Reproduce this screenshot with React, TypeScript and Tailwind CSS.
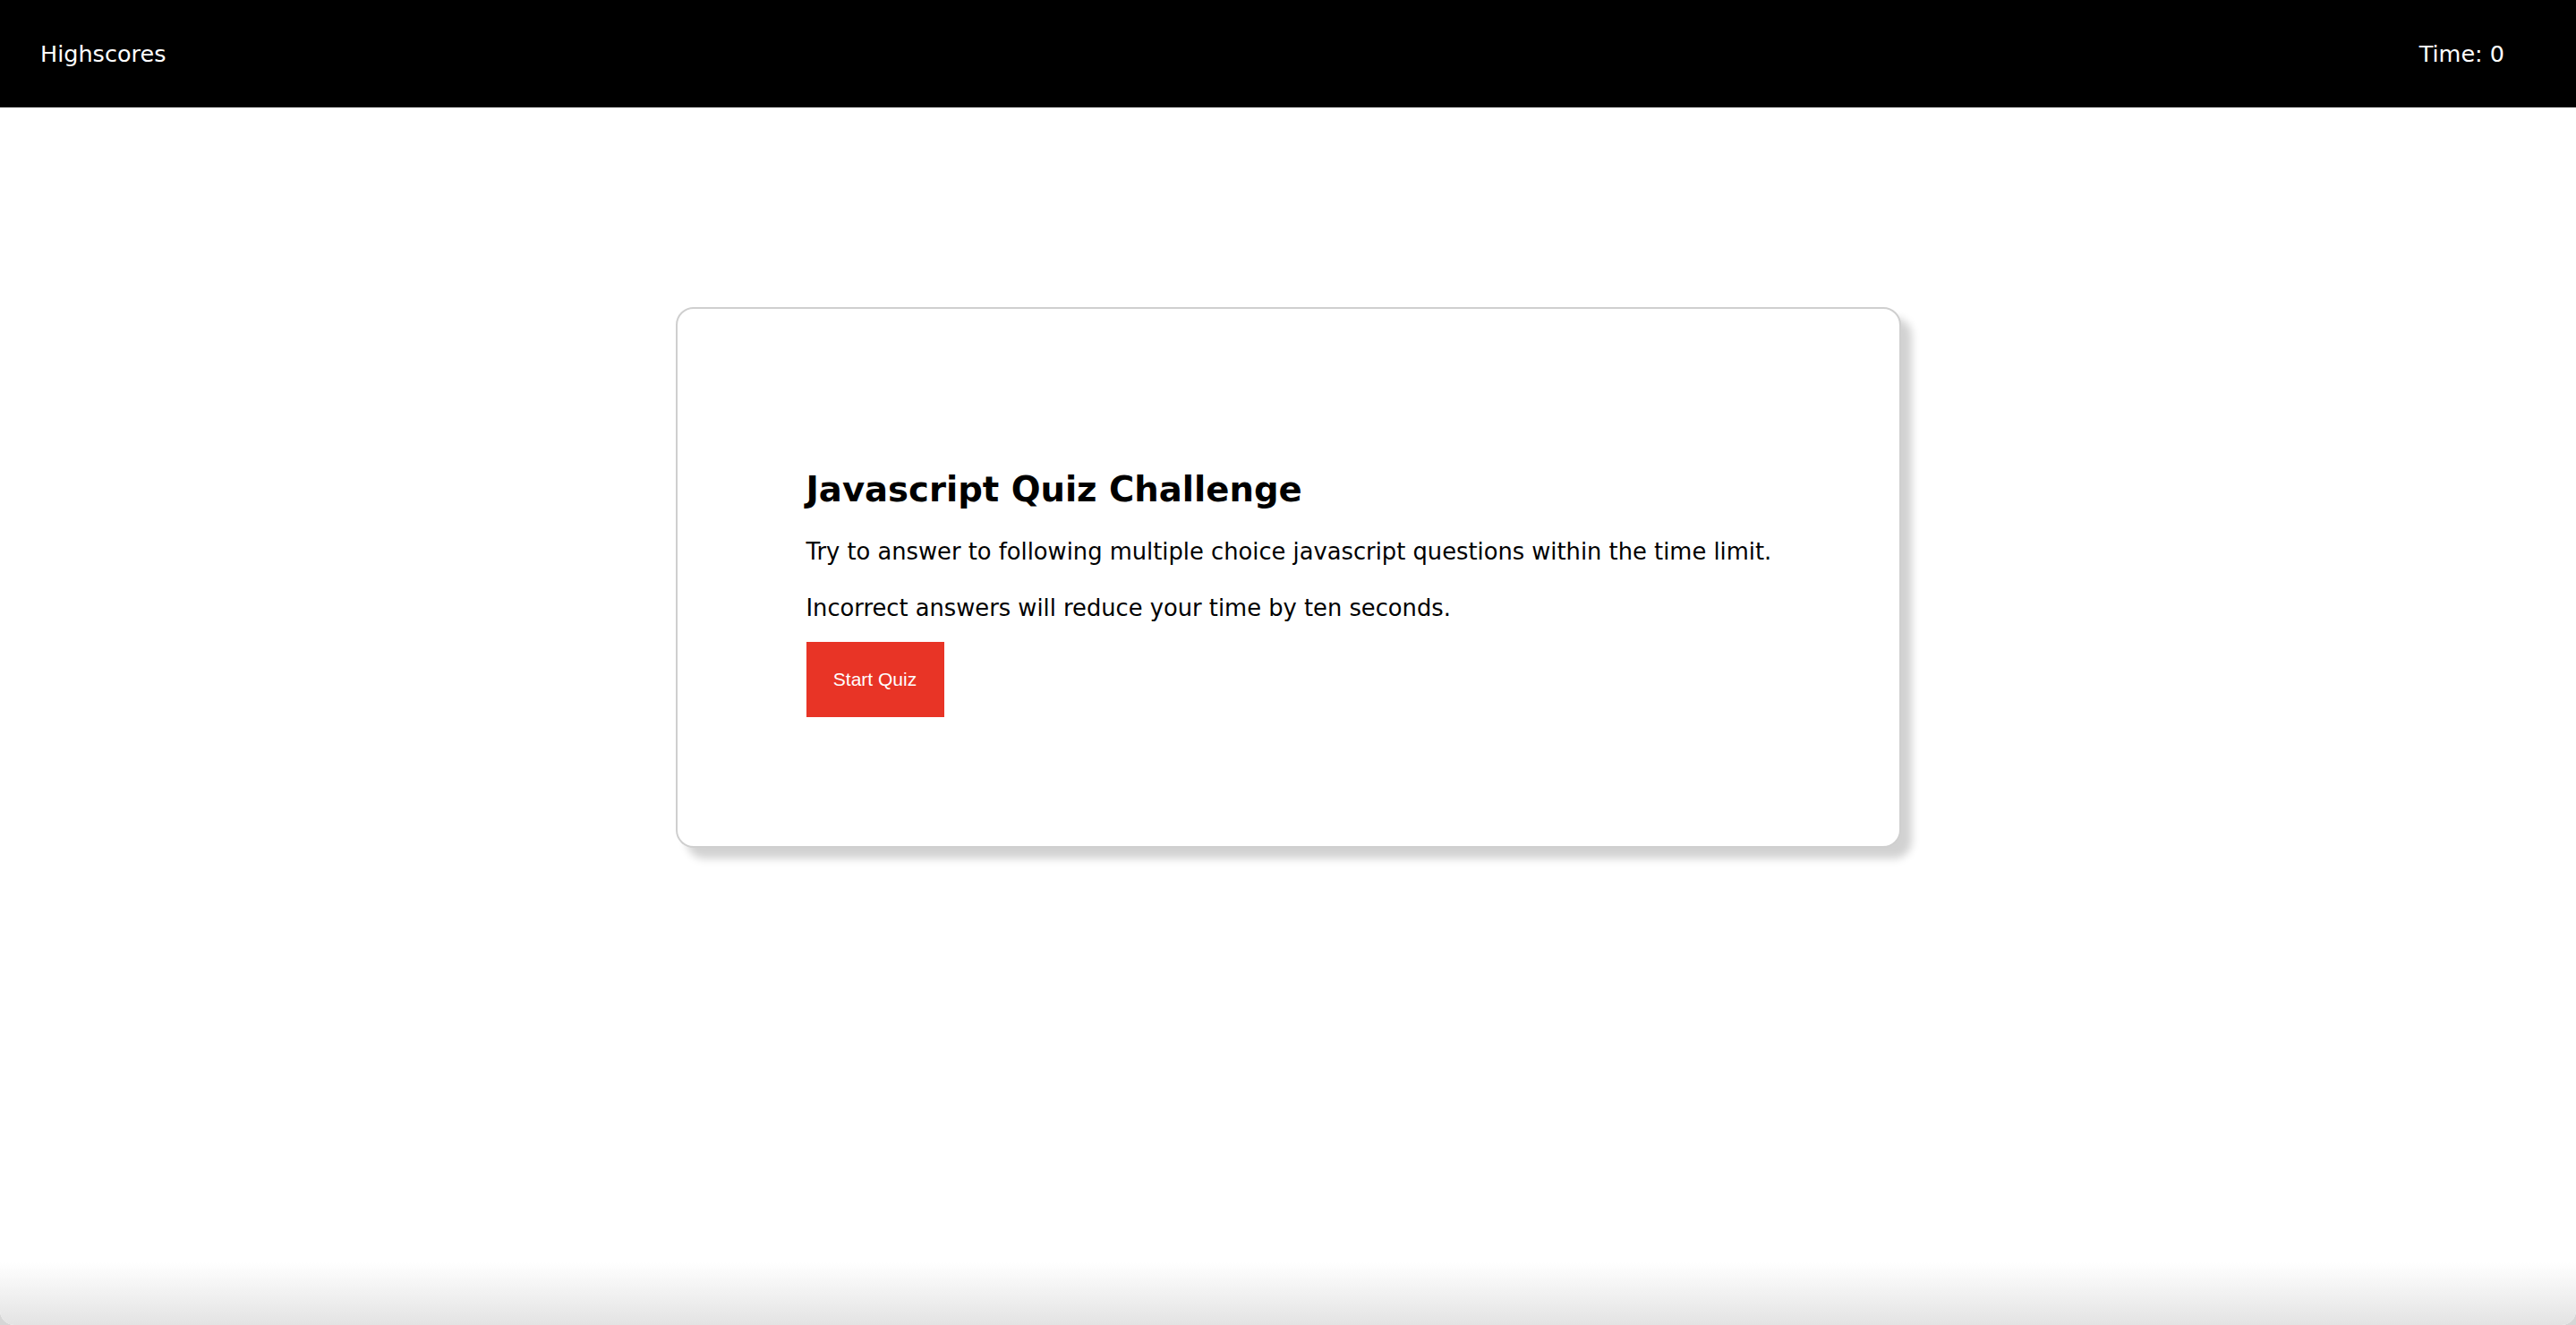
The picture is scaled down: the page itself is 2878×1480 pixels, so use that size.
export default function App() {
  return (
    <div className="h-[1480px] w-full bg-[#d6d6d6] font-['DejaVu_Sans',Verdana,sans-serif]">
      <div className="flex h-full flex-col overflow-hidden rounded-b-[16px] bg-white">
        <header className="flex h-[120px] shrink-0 items-center justify-between bg-black pl-[45px] pr-[80px] text-[25.5px] text-white">
          <span>Highscores</span>
          <span>Time: 0</span>
        </header>

        <main className="flex flex-1 flex-col">
          <div className="mx-auto mt-[223px] w-[1369px] rounded-[20px] border-2 border-[#cfcfcf] bg-white pl-[144px] pt-[178px] pb-[144px] shadow-[12px_12px_10px_rgba(0,0,0,0.18)]">
            <h1 className="text-[38.6px] font-bold leading-[48px] text-black">Javascript Quiz Challenge</h1>
            <p className="mt-[27px] text-[25.75px] leading-[36px] text-black">
              Try to answer to following multiple choice javascript questions within the time limit.
            </p>
            <p className="mt-[27px] text-[25.75px] leading-[36px] text-black">
              Incorrect answers will reduce your time by ten seconds.
            </p>
            <button className="mt-[20px] flex h-[84px] w-[154px] items-center justify-center bg-[#e83426] font-['Liberation_Sans',Arial,sans-serif] text-[21px] text-white">
              Start Quiz
            </button>
          </div>
          <div className="flex-1" />
          <div className="h-[70px] bg-gradient-to-b from-white to-[#e3e3e3]" />
        </main>
      </div>
    </div>
  )
}
